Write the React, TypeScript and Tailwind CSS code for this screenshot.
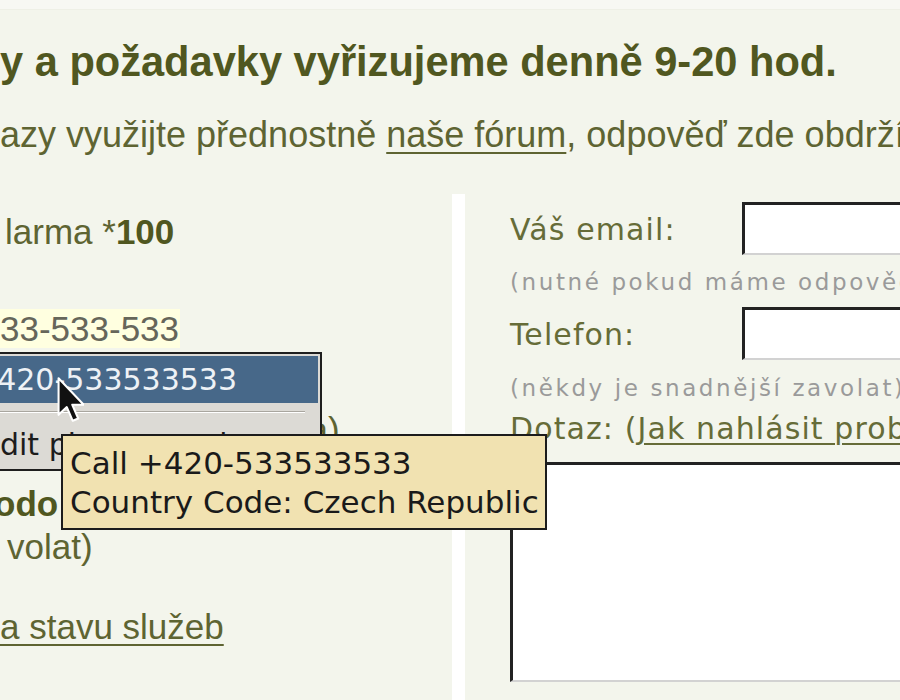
import React from 'react';

const sans = "font-['Liberation_Sans',Arial,sans-serif]";
const dejavu = "font-['DejaVu_Sans',Verdana,sans-serif]";

function MouseCursor(): React.JSX.Element {
  return (
    <svg
      className="absolute left-[56px] top-[376px]"
      width="28"
      height="48"
      viewBox="0 0 12 21"
      fill="none"
    >
      <path
        d="M1 1 L1 17 L4.6 13.6 L7.2 19.6 L9.6 18.6 L7 12.6 L12 12.6 Z"
        fill="#111111"
        stroke="#ffffff"
        strokeWidth="0.9"
        strokeLinejoin="round"
      />
    </svg>
  );
}

function ContextMenu(): React.JSX.Element {
  return (
    <div className={`absolute left-[-40px] top-[352px] w-[362px] overflow-hidden border-2 border-[#1e1e1e] bg-[#dcdad5] p-[2px] ${dejavu}`}>
      <div className="h-[47px] flex items-center bg-[#476889] pl-[8px] text-[30px] leading-none text-[#eef2f6] whitespace-nowrap">
        +420-533533533
      </div>
      <div className="mt-[8px] mr-[13px] border-t border-[#a9a69f] border-b border-b-white" />
      <div className="h-[54px] flex items-center pl-[17px] pt-[10px] text-[30px] leading-none text-[#1c1c1c] whitespace-nowrap">
        Edit phone number
      </div>
    </div>
  );
}

function Tooltip(): React.JSX.Element {
  return (
    <div className={`absolute left-[61px] top-[434px] w-[486px] h-[96px] border-2 border-[#1c1c1c] bg-[#f1e2b1] pl-[7px] pt-[8px] ${dejavu}`}>
      <p className="text-[31px] leading-[39px] text-[#1a1a1a] whitespace-nowrap">Call +420-533533533</p>
      <p className="text-[31px] leading-[39px] text-[#1a1a1a] whitespace-nowrap">Country Code: Czech Republic</p>
    </div>
  );
}

export default function App(): React.JSX.Element {
  return (
    <div className={`relative w-[900px] h-[700px] overflow-hidden bg-[#f3f5ec] ${sans}`}>
      <div className="h-[10px] bg-[#f7f8f3] border-b border-[#eef0e6]" />

      {/* Header */}
      <h1 className="mt-[31px] text-[41.6px] leading-none font-bold text-[#505720] whitespace-nowrap">
        y a požadavky vyřizujeme denně 9-20 hod.
      </h1>
      <p className="mt-[34px] text-[36px] leading-none text-[#5e6432] whitespace-nowrap">
        azy využijte přednostně{' '}
        <span className="underline decoration-2 underline-offset-[5px]">naše fórum</span>, odpověď zde obdržíte
      </p>

      <div className="mt-[41px] flex h-[520px]">
        {/* Left column */}
        <div className="w-[452px] shrink-0 text-[35px] leading-none text-[#5e6432] whitespace-nowrap">
          <p className="mt-[20px] pl-[5px]">
            larma *<span className="font-bold text-[#505720]">100</span>
          </p>
          <p className="mt-[62px]">
            <span className="bg-[#ffffe0] text-[#66665a] pr-[1px]">33-533-533</span>
          </p>
          <p className="mt-[66px] pl-[118px]">(linka zdarma)</p>
          <p className="mt-[39px] -ml-[6px] font-bold text-[#505720]">odo</p>
          <p className="mt-[8px] pl-[7px]">volat)</p>
          <p className="mt-[45px]">
            <span className="underline decoration-2 underline-offset-[5px]">a stavu služeb</span>
          </p>
        </div>

        <div className="w-[13px] shrink-0 bg-white" />

        {/* Right column: form */}
        <div className={`flex-1 pl-[45px] ${dejavu} text-[#666c38]`}>
          <div className="mt-[8px] flex items-center">
            <label className="w-[232px] shrink-0 pt-[4px] text-[30px] leading-none tracking-[1.1px]">Váš email:</label>
            <div className="w-[300px] h-[53px] shrink-0 bg-white border-t-[3px] border-l-[3px] border-[#222222] border-b-2 border-b-[#d2d2d2]" />
          </div>
          <p className="mt-[16px] text-[23px] leading-none tracking-[2.6px] text-[#9a9a9a] whitespace-nowrap">
            (nutné pokud máme odpovědět)
          </p>

          <div className="mt-[13px] flex items-center">
            <label className="w-[232px] shrink-0 pt-[4px] text-[30px] leading-none tracking-[1.1px]">Telefon:</label>
            <div className="w-[300px] h-[53px] shrink-0 bg-white border-t-[3px] border-l-[3px] border-[#222222] border-b-2 border-b-[#d2d2d2]" />
          </div>
          <p className="mt-[17px] text-[23px] leading-none tracking-[2.6px] text-[#9a9a9a] whitespace-nowrap">
            (někdy je snadnější zavolat)
          </p>

          <p className="mt-[14px] text-[30px] leading-none tracking-[1.1px] whitespace-nowrap">
            Dotaz: (
            <span className="underline decoration-2 underline-offset-[4px]">Jak nahlásit problém</span>)
          </p>
          <div className="mt-[18px] w-[420px] h-[220px] bg-white border-t-[3px] border-l-[3px] border-[#222222] border-b-2 border-b-[#d2d2d2]" />
        </div>
      </div>

      <ContextMenu />
      <Tooltip />
      <MouseCursor />
    </div>
  );
}
